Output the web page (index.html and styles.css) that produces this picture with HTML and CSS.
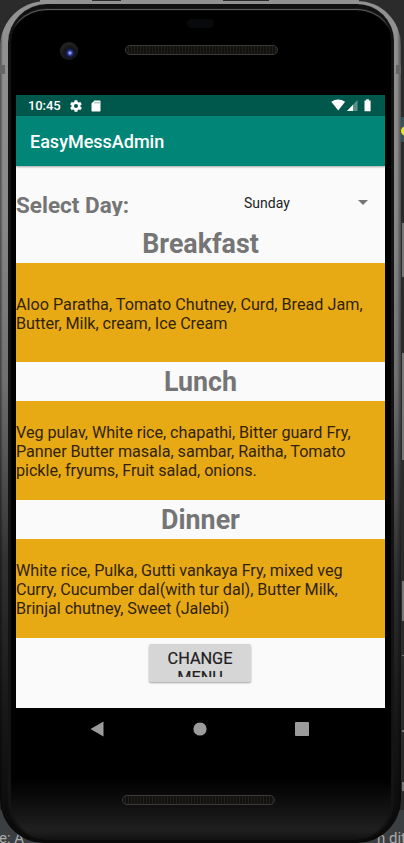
FILE: index.html
```html
<!DOCTYPE html>
<html lang="en">
<head>
<meta charset="utf-8">
<title>EasyMessAdmin</title>
<link rel="stylesheet" href="styles.css">
</head>
<body>
<div class="desktop">
  <svg class="backdrop" width="404" height="843" viewBox="0 0 404 843">
    <rect width="404" height="843" fill="#2b2b2b"/>
    <path d="M40 0h52v2H40zM121 0h102v2H121zM269 0h90v2H269z" fill="#929292"/>
    <rect x="400" y="117" width="4" height="25" fill="#385057"/>
    <circle cx="406" cy="131" r="5" fill="#e6e52c"/>
    <path d="M402 223h2v54h-2zM402 353h2v107h-2z" fill="#777"/>
    <path d="M402 581h2v40h-2zM402 655h2v1h-2zM402 730h2v2h-2zM402 782h2v9h-2z" fill="#777"/>
    <rect y="810" width="404" height="33" fill="#3c3f41"/>
  </svg>
  <span class="behind behind-left">e: A</span>
  <span class="behind behind-right">n dit</span>
  <div class="phone">
    <div class="bezel">
      <header class="top">
        <span class="sensor"></span>
        <span class="camera"></span>
        <span class="speaker"></span>
      </header>
      <main class="screen">
        <div class="status">
          <span class="time">10:45</span>
          <svg class="gear" width="14" height="14" viewBox="0 0 24 24"><path fill="#fff" d="M19.4 13c0-.3.1-.6.1-1s0-.7-.1-1l2.1-1.700c.2-.1.200-.4.100-.6l-2-3.500c-.1-.2-.4-.3-.6-.2l-2.500 1c-.5-.4-1.100-.7-1.700-1l-.4-2.600c0-.200-.2-.4-.5-.4h-4c-.2 0-.4.200-.5.4L9 5c-.6.300-1.200.6-1.700 1l-2.500-1c-.2-.1-.5 0-.6.200l-2 3.500c-.1.200-.1.500.1.600L4.500 11c0 .3-.1.600-.1 1s0 .7.100 1l-2.200 1.700c-.2.100-.2.400-.1.600l2 3.500c.1.200.4.300.6.200l2.500-1c.5.400 1.100.7 1.700 1l.4 2.600c0 .2.200.4.500.4h4c.2 0 .4-.2.5-.4L15 19c.6-.3 1.200-.6 1.700-1l2.500 1c.2.100.5 0 .6-.2l2-3.500c.1-.2.100-.5-.1-.6zM12 15.500a3.500 3.500 0 1 1 0-7 3.500 3.500 0 0 1 0 7z"/></svg>
          <svg class="card" width="10" height="12" viewBox="0 0 10 12"><path fill="#fff" d="M3.500 0.500H8.700Q9.500.5 9.500 1.300V10.700Q9.500 11.500 8.700 11.500H1.300Q.5 11.500.5 10.700V3.500z"/><path stroke="#00574b" stroke-width=".6" d="M4 1.800v1.700M6 1.800v1.700M8 1.800v1.700"/></svg>
          <svg class="signals" width="42" height="13" viewBox="0 0 42 13"><path fill="#fff" d="M.3 2.800Q7.200-1.600 14.100 2.800L7.200 11.600z"/><path fill="#5c9188" d="M26.500 1v11H16z"/><path fill="#fff" d="M22 5.700V12h-6z"/><path fill="#fff" d="M33.500 1.500h1.700V.3h2.700v1.200h1.700v10.700h-6.100z"/></svg>
        </div>
        <div class="appbar">EasyMessAdmin</div>
        <div class="content">
          <div class="picker">
            <span class="label">Select Day:</span>
            <span class="day">Sunday</span>
            <span class="arrow"></span>
          </div>
          <h2 class="heading breakfast">Breakfast</h2>
          <div class="menu"><p>Aloo Paratha, Tomato Chutney, Curd, Bread Jam,<br><span class="snug">Butter, Milk, cream, Ice Cream</span></p></div>
          <h2 class="heading">Lunch</h2>
          <div class="menu"><p class="snug">Veg pulav, White rice, chapathi, Bitter guard Fry,<br>Panner Butter masala, sambar, Raitha, Tomato<br>pickle, fryums, Fruit salad, onions.</p></div>
          <h2 class="heading">Dinner</h2>
          <div class="menu"><p class="snug">White rice, Pulka, Gutti vankaya Fry, mixed veg<br>Curry, Cucumber dal(with tur dal), Butter Milk,<br>Brinjal chutney, Sweet (Jalebi)</p></div>
          <button class="change"><span>CHANGE<br>MENU</span></button>
        </div>
      </main>
      <nav class="nav">
        <svg width="14" height="16" viewBox="0 0 14 16"><path d="M13.500.5v15L.5 8z" fill="#9b9b9b"/></svg>
        <svg width="14" height="14" viewBox="0 0 14 14"><circle cx="7" cy="7" r="6.600" fill="#9b9b9b"/></svg>
        <svg width="14" height="14" viewBox="0 0 14 14"><rect width="14" height="14" rx="1" fill="#9b9b9b"/></svg>
      </nav>
      <footer class="bottom"><span class="speaker"></span></footer>
    </div>
  </div>
</div>
</body>
</html>
```
FILE: styles.css
```css
* { box-sizing: border-box; }
body { margin: 0; font-family: Roboto, "Liberation Sans", sans-serif; background: #2b2b2b; }
.desktop { position: relative; width: 404px; height: 843px; overflow: hidden; }
.backdrop { position: absolute; inset: 0; }
.behind { position: absolute; top: 830px; font-size: 15px; line-height: 17px; color: #aaa; white-space: nowrap; }
.behind-left { left: -1px; }
.behind-right { left: 377px; }
.phone {
  position: relative;
  width: 401px; height: 842px; margin-top: 1px;
  padding: 3px 7px 3px 8px;
  border-radius: 46px 44px 44px 44px;
  background: linear-gradient(90deg, rgba(0,0,0,.45) 0, transparent 3px, transparent 397px, rgba(0,0,0,.45) 401px), linear-gradient(#929292 0, #888 25%, #707070 45%, #303030 67%, #171717 85%, #090909 100%);
}
.phone::before, .phone::after {
  content: ""; position: absolute; top: 64px; height: 9px; width: 5px; background: #656565;
}
.phone::before { left: 0; }
.phone::after { right: 0; }
.bezel {
  height: 836px; padding: 0 9px 0 8px; overflow: hidden;
  border-radius: 39px 37px 38px 38px;
  background: linear-gradient(transparent 775px, #0c0c0c 795px, #202020 826px, #111 836px), #000;
  box-shadow: inset 3px 0 1px #141414, inset -3px 0 1px #141414, inset 0 6px 1px -1px #111, inset 0 7px 1px -1px #747474;
}
.top { position: relative; height: 91px; }
.sensor { position: absolute; left: 171px; top: 15px; width: 27px; height: 9px; border-radius: 5px; background: #07090c; }
.camera {
  position: absolute; left: 44px; top: 38px; width: 18px; height: 18px; border-radius: 50%;
  background: radial-gradient(circle at 10px 11px, #98a0f0 0 1px, #3642a0 2px, #10163c 4px, #161618 6px, #222 9px);
}
.speaker {
  display: block; width: 153px; height: 10px; border: 1px solid #3a3a3a; border-radius: 5px;
  background: repeating-linear-gradient(90deg, #12110e 0 2px, #211f1b 2px 3px);
}
.top .speaker { position: absolute; left: 109px; top: 41px; }
.screen { height: 613px; width: 369px; background: #fafafa; overflow: hidden; }
.status { height: 21px; background: #00574b; display: flex; align-items: center; padding-left: 12px; color: #fff; }
.time { width: 33px; font-size: 13px; font-weight: 500; line-height: 21px; letter-spacing: -.1px; }
.gear { margin-left: 8px; }
.card { margin-left: 8px; }
.signals { margin-left: auto; margin-right: 12px; }
.appbar {
  position: relative; height: 50px; line-height: 51px; padding-left: 14px; background: #008577; color: #fff;
  font-size: 18px; font-weight: 500; box-shadow: 0 1px 2px rgba(0,0,0,.35);
}
.picker { display: flex; height: 50px; padding-top: 24px; color: #757575; overflow: hidden; }
.label { width: 228px; font-size: 22.500px; font-weight: 700; line-height: 30px; height: 26px; overflow: hidden; }
.day { width: 114px; font-size: 14px; line-height: 27px; color: #222; }
.arrow { width: 0; height: 0; margin-top: 10px; border: 5px solid transparent; border-top-color: #757575; border-bottom: 0; }
.heading { margin: 0; height: 39px; line-height: 41px; text-align: center; font-size: 26.800px; font-weight: 700; color: #757575; }
.breakfast { height: 47px; padding-top: 8px; }
.menu { height: 99px; padding-top: 2px; background: #e8aa14; display: flex; align-items: center; }
.menu p { margin: 0; font-size: 16.200px; line-height: 19px; color: #30230a; white-space: nowrap; }
.snug { letter-spacing: -.05px; }
.change {
  display: block; width: 102px; height: 38px; margin: 6px 0 0 133px; padding: 4px 0 5px; border: 0; border-radius: 2px;
  background: #d6d6d6; color: #202020; font: 400 16.300px/19px Roboto, sans-serif; -webkit-text-stroke: .2px #202020; box-shadow: 0 1px 2px rgba(0,0,0,.35);
}
.change span { display: block; height: 29px; padding-top: 1px; overflow: hidden; }
.nav { display: flex; height: 42px; align-items: center; justify-content: space-between; padding: 0 76px 0 74px; }
.bottom { display: flex; height: 90px; padding: 45px 0 0 106px; }
```
